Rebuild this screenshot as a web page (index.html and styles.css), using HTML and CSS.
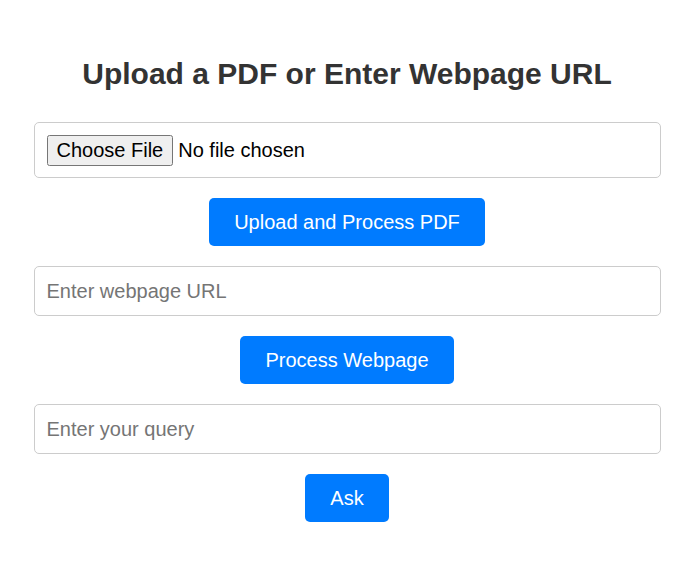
FILE: index.html
```html
<!DOCTYPE html>
<html lang="en">
<head>
<meta charset="utf-8">
<title>Upload a PDF or Enter Webpage URL</title>
<link rel="stylesheet" href="styles.css">
</head>
<body>
<div class="container">
  <h1 class="title">Upload a PDF or Enter Webpage URL</h1>
  <input class="field field-file" type="file" accept="application/pdf">
  <button class="btn">Upload and Process PDF</button>
  <input class="field" type="text" placeholder="Enter webpage URL">
  <button class="btn">Process Webpage</button>
  <input class="field" type="text" placeholder="Enter your query">
  <button class="btn">Ask</button>
</div>
</body>
</html>
```

FILE: styles.css
```css
html, body {
  margin: 0;
  padding: 0;
  background: #ffffff;
  font-family: "Liberation Sans", Arial, sans-serif;
}

.container {
  max-width: 627px;
  margin: 0 auto;
  padding: 40px 0;
  display: flex;
  flex-direction: column;
  align-items: center;
  gap: 20px;
}

.title {
  margin: 17px 0 11px;
  font-size: 30px;
  font-weight: bold;
  color: #333333;
  text-align: center;
}

.field {
  box-sizing: border-box;
  width: 100%;
  padding: 12px;
  font-size: 20px;
  line-height: 24px;
  font-family: "Liberation Sans", Arial, sans-serif;
  border: 1px solid #cccccc;
  border-radius: 5px;
  background: #ffffff;
  color: #000000;
}

.field-file {
  padding-bottom: 11px;
}

.field::placeholder {
  color: #757575;
}

.field::file-selector-button {
  font-size: 20px;
  font-family: "Liberation Sans", Arial, sans-serif;
  padding: 2px 8px;
  margin-right: 5px;
}

.btn {
  padding: 12px 25px;
  font-size: 20px;
  line-height: 24px;
  font-family: "Liberation Sans", Arial, sans-serif;
  color: #ffffff;
  background: #007bff;
  border: none;
  border-radius: 5px;
  cursor: pointer;
}
```
